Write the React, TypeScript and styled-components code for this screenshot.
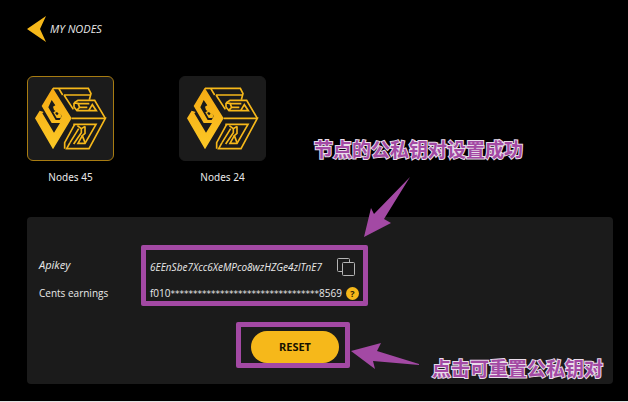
import React from "react";
import styled, { createGlobalStyle } from "styled-components";

const gold = "#f6b81a";
const purple = "#a349a4";
const panel = "#1b1b1b";

const GlobalStyle = createGlobalStyle`
  *, *::before, *::after { box-sizing: border-box; }
  body {
    margin: 0;
    background: #000;
    color: #e9e9e9;
    font: 10px/16px "Noto Sans", "Noto Sans CJK SC", sans-serif;
  }
  button { font: inherit; color: inherit; cursor: pointer; }
`;

const Page = styled.main`
  min-height: 100vh;
  padding: 16px 15px 17px 27px;
  border-bottom: 1px solid #e4e4e4;
`;

const Header = styled.header`
  display: flex;
  align-items: center;
  gap: 4px;
  height: 26px;
`;

const BackButton = styled.button`
  display: flex;
  padding: 0;
  border: 0;
  background: none;
`;

const Title = styled.h1`
  margin: 0;
  font-family: "Open Sans", sans-serif;
  font-size: 11px;
  font-weight: 400;
  font-style: italic;
`;

const NodeList = styled.div`
  display: flex;
  gap: 65px;
  margin-top: 34px;
`;

const NodeButton = styled.button`
  display: flex;
  flex-direction: column;
  align-items: center;
  gap: 8px;
  width: 87px;
  padding: 0;
  border: 0;
  background: none;
`;

const NodeTile = styled.span<{ $selected?: boolean }>`
  display: grid;
  place-items: center;
  width: 100%;
  height: 85px;
  border: 1px solid ${(p) => (p.$selected ? "#a87c12" : panel)};
  border-radius: 6px;
  background: ${panel};
`;

const Panel = styled.section`
  position: relative;
  display: flex;
  flex-direction: column;
  gap: 25px;
  margin-top: 32px;
  padding: 37px 12px 21px;
  border-radius: 4px;
  background: ${panel};
`;

const Details = styled.div`
  display: grid;
  grid-template-columns: 102px max-content;
  column-gap: 9px;
`;

const Labels = styled.div`
  display: grid;
  row-gap: 12px;
  align-content: start;
  padding-top: 3px;
`;

const Label = styled.span<{ $italic?: boolean }>`
  font-family: "Open Sans", sans-serif;
  font-size: ${(p) => (p.$italic ? 11 : 10)}px;
  font-style: ${(p) => (p.$italic ? "italic" : "normal")};
`;

const Marked = styled.div<{ $inset: string }>`
  position: relative;

  &::after {
    content: "";
    position: absolute;
    inset: ${(p) => p.$inset};
    border: 5px solid ${purple};
    border-radius: 2px;
    pointer-events: none;
  }
`;

const Value = styled.div<{ $italic?: boolean; $gap: number }>`
  display: flex;
  align-items: center;
  gap: ${(p) => p.$gap}px;
  height: 26px;
  font-family: "Open Sans", sans-serif;
  font-style: ${(p) => (p.$italic ? "italic" : "normal")};
`;

const Mask = styled.span`
  font-family: "DejaVu Sans", sans-serif;
  font-size: 9px;
`;

const IconButton = styled.button`
  display: flex;
  padding: 0;
  border: 0;
  background: none;
`;

const HelpButton = styled.button`
  flex: none;
  width: 13px;
  height: 13px;
  padding: 0;
  border: 0;
  border-radius: 50%;
  background: ${gold};
  color: #2a2105;
  font-size: 9px;
  font-weight: 700;
  line-height: 13px;
`;

const Actions = styled.div`
  display: flex;
  justify-content: center;
  padding-right: 50px;
`;

const ResetButton = styled.button`
  display: block;
  width: 88px;
  height: 32px;
  padding: 0;
  border: 0;
  border-radius: 16px;
  background: ${gold};
  color: #171200;
  font-size: 11px;
  font-weight: 700;
`;

const Note = styled.p<{ $left: number; $top: number }>`
  position: absolute;
  left: ${(p) => p.$left}px;
  top: ${(p) => p.$top}px;
  margin: 0;
  color: ${purple};
  font: 700 19px/24px "Noto Sans CJK SC", sans-serif;
  white-space: nowrap;
  -webkit-text-stroke: 2px #e9dcea;
  paint-order: stroke fill;
`;

const Arrow = styled.svg<{ $left: number; $top: number }>`
  position: absolute;
  left: ${(p) => p.$left}px;
  top: ${(p) => p.$top}px;
  fill: ${purple};
`;

function CubeLogo({ id }: { id: string }) {
  return (
    <svg width="74" height="70" viewBox="0 0 222 210" aria-hidden="true">
      <defs>
        <linearGradient id={id} x1="0" y1="0" x2="0" y2="1">
          <stop offset="0" stopColor="#f6a913" />
          <stop offset="1" stopColor="#fbc926" />
        </linearGradient>
      </defs>
      <path
        fill={`url(#${id})`}
        fillRule="evenodd"
        d="M56 11 L113 103 L57 196 L3 103 L17 80 L29 84 L25 88 L60 146 L78 117 L53 117 L23 66 Z
           M53 48 L64 64 L57 68 L60 78 L82 93 L82 99 L77 108 L65 108 L43 70 Z"
      />
      <path fill={gold} d="M58 85 L69 79 L82 93 L80 102 L68 102 Z" />
      <path fill={panel} d="M63 87 L69 84 L74 89 L69 94 Z" />
      <g fill="none" stroke={gold} strokeWidth="5">
        <path d="M57 13 H163 L171 29 L166 47 M90 33 H168 M74 13 L86 33 M90 33 L118 76" />
        <path d="M120 57 L132 49 H182 L214 103" />
        <path d="M120 57 L120 69 L128 79 L137 70 L132 58 L120 57 M137 70 H160 M128 80 H187 L175 62 L164 80 M134 59 H166" />
        <path d="M113 103 H214 L165 194 H98 L108 176" />
        <path d="M118 121 H186 L153 178 H132 L145 155" />
        <path d="M122 121 L92 176 V194 M108 176 L134 134" />
        <path d="M130 125 L142 134 L153 127 M142 134 V146 L119 180 M153 127 V148 L145 155 L153 176" />
      </g>
    </svg>
  );
}

function NodeItem({ name, selected }: { name: string; selected?: boolean }) {
  return (
    <NodeButton type="button" aria-pressed={!!selected}>
      <NodeTile $selected={selected}>
        <CubeLogo id={name.replace(" ", "-")} />
      </NodeTile>
      {name}
    </NodeButton>
  );
}

export default function App() {
  return (
    <>
      <GlobalStyle />
      <Page>
        <Header>
          <BackButton type="button" aria-label="Back">
            <svg width="19" height="26" viewBox="0 0 19 26">
              <path d="M0 13 L19 0 L13 13 L19 26 Z" fill={gold} />
            </svg>
          </BackButton>
          <Title>MY NODES</Title>
        </Header>

        <NodeList>
          <NodeItem name="Nodes 45" selected />
          <NodeItem name="Nodes 24" />
        </NodeList>

        <Panel>
          <Details>
            <Labels>
              <Label $italic>Apikey</Label>
              <Label>Cents earnings</Label>
            </Labels>
            <Marked $inset="-9px -9px 0 -9px">
              <Value $italic $gap={15}>
                6EEnSbe7Xcc6XeMPco8wzHZGe4zlTnE7
                <IconButton type="button" aria-label="Copy key">
                  <svg width="18" height="18" viewBox="0 0 18 18" fill="none" stroke="#b5b5b5">
                    <path d="M5 13.5 H1.5 Q0.5 13.5 0.5 12.5 V1.5 Q0.5 0.5 1.5 0.5 H11.5 Q12.5 0.5 12.5 1.5 V4" />
                    <rect x="5.5" y="4.5" width="12" height="13" rx="1" />
                  </svg>
                </IconButton>
              </Value>
              <Value $gap={4}>
                <span>
                  f010<Mask>*********************************</Mask>8569
                </span>
                <HelpButton type="button" aria-label="Help">?</HelpButton>
              </Value>
            </Marked>
          </Details>

          <Actions>
            <Marked $inset="-9px -11px -5px -15px">
              <ResetButton type="button">RESET</ResetButton>
            </Marked>
          </Actions>

          <Note $left={287} $top={-80}>节点的公私钥对设置成功</Note>
          <Arrow $left={337} $top={-40} width="47" height="61" viewBox="0 0 47 61" aria-hidden="true">
            <path d="M0 60 L7 31 L10 37 L46 0 L20 42 L27 46 Z" />
          </Arrow>
          <Note $left={405} $top={139}>点击可重置公私钥对</Note>
          <Arrow $left={324} $top={126} width="68" height="27" viewBox="0 0 68 27" aria-hidden="true">
            <path d="M0 8 L30 0 L26 8 L68 21 V22 L22 18 L24 26 Z" />
          </Arrow>
        </Panel>
      </Page>
    </>
  );
}
